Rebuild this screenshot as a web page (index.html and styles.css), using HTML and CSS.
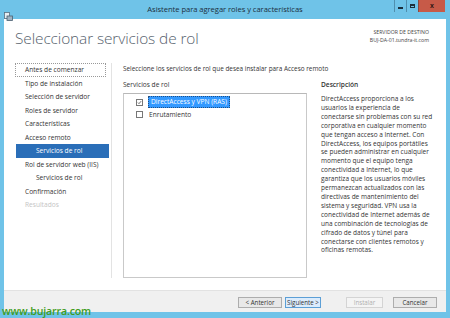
FILE: index.html
```html
<!DOCTYPE html>
<html lang="es">
<head>
<meta charset="utf-8">
<title>Asistente para agregar roles y características</title>
<link rel="stylesheet" href="styles.css">
</head>
<body>
<div class="window">
  <div class="titlebar">
    <div class="app-icon">
      <svg width="9" height="9" viewBox="0 0 9 9">
        <rect x="0.5" y="0.5" width="5" height="6" fill="#e8eef3" stroke="#5a6f80" stroke-width="0.8"/>
        <rect x="3" y="4" width="5.5" height="4.5" fill="#9fb3c2" stroke="#4a5f70" stroke-width="0.8"/>
      </svg>
    </div>
    <div class="title">Asistente para agregar roles y características</div>
    <div class="winbtns">
      <div class="wb wb-min"><span class="glyph-min"></span></div>
      <div class="wb wb-max"><span class="glyph-max"></span></div>
      <div class="wb wb-close">x</div>
    </div>
  </div>
  <div class="client">
    <div class="header">
      <h1 class="page-title">Seleccionar servicios de rol</h1>
      <div class="dest">
        <div>SERVIDOR DE DESTINO</div>
        <div>BUJ-DA-01.tundra-it.com</div>
      </div>
    </div>
    <div class="body">
      <nav class="nav">
        <div class="nav-item first">Antes de comenzar</div>
        <div class="nav-item">Tipo de instalación</div>
        <div class="nav-item">Selección de servidor</div>
        <div class="nav-item">Roles de servidor</div>
        <div class="nav-item">Características</div>
        <div class="nav-item">Acceso remoto</div>
        <div class="nav-item sub active">Servicios de rol</div>
        <div class="nav-item">Rol de servidor web (IIS)</div>
        <div class="nav-item sub">Servicios de rol</div>
        <div class="nav-item">Confirmación</div>
        <div class="nav-item disabled">Resultados</div>
      </nav>
      <main class="main">
        <div class="intro">Seleccione los servicios de rol que desea instalar para Acceso remoto</div>
        <div class="cols">
          <div class="services">
            <div class="label">Servicios de rol</div>
            <div class="listbox">
              <div class="row">
                <span class="cb checked">
                  <svg width="7" height="7" viewBox="0 0 7 7"><path d="M1.3 3.6 L2.8 5.1 L5.8 1.6" fill="none" stroke="#333" stroke-width="1"/></svg>
                </span>
                <span class="row-text selected">DirectAccess y VPN (RAS)</span>
              </div>
              <div class="row">
                <span class="cb"></span>
                <span class="row-text">Enrutamiento</span>
              </div>
            </div>
          </div>
          <div class="desc">
            <div class="label strong">Descripción</div>
            <p class="desc-text">DirectAccess proporciona a los<br>usuarios la experiencia de<br>conectarse sin problemas con su red<br>corporativa en cualquier momento<br>que tengan acceso a Internet. Con<br>DirectAccess, los equipos portátiles<br>se pueden administrar en cualquier<br>momento que el equipo tenga<br>conectividad a Internet, lo que<br>garantiza que los usuarios móviles<br>permanezcan actualizados con las<br>directivas de mantenimiento del<br>sistema y seguridad. VPN usa la<br>conectividad de Internet además de<br>una combinación de tecnologías de<br>cifrado de datos y túnel para<br>conectarse con clientes remotos y<br>oficinas remotas.</p>
          </div>
        </div>
      </main>
    </div>
    <div class="footer">
      <button class="btn">&lt; Anterior</button>
      <button class="btn default">Siguiente &gt;</button>
      <button class="btn disabled-btn">Instalar</button>
      <button class="btn">Cancelar</button>
    </div>
  </div>
  <div class="watermark">www.bujarra.com</div>
</div>
</body>
</html>
```

FILE: styles.css
```css
* { box-sizing: border-box; }
html, body { margin: 0; padding: 0; }
body {
  width: 450px;
  height: 318px;
  overflow: hidden;
  background: #6fc3e8;
  font-family: "Open Sans", "Noto Sans", sans-serif;
  color: #333;
}
.window {
  position: relative;
  width: 450px;
  height: 318px;
  display: flex;
  flex-direction: column;
  background: #6fc3e8;
}
.titlebar {
  height: 19px;
  display: flex;
  align-items: flex-start;
  position: relative;
}
.app-icon {
  width: 9px;
  height: 9px;
  margin: 4px 0 0 4px;
}
.title {
  position: absolute;
  left: 0;
  right: 0;
  top: 4px;
  text-align: center;
  font-size: 7.6px;
  color: #1b2f3d;
  letter-spacing: -0.05px;
}
.winbtns {
  position: absolute;
  top: 0;
  right: 5px;
  display: flex;
  height: 12px;
}
.wb {
  height: 12px;
  border-left: 1px solid #4f8fae;
  display: flex;
  align-items: center;
  justify-content: center;
}
.wb-min { width: 12px; }
.wb-max { width: 12px; }
.wb-close {
  width: 27px;
  background: #c75a48;
  color: #2a1410;
  font-size: 7px;
  font-weight: bold;
  border-left: 1px solid #8a4a40;
  line-height: 12px;
  font-family: "Liberation Sans", sans-serif;
}
.glyph-min {
  width: 5px;
  height: 2px;
  background: #1c2f3c;
  margin-top: 3px;
}
.glyph-max {
  width: 5px;
  height: 4px;
  border: 1px solid #1c2f3c;
  border-top-width: 2px;
}
.client {
  margin: 0 4px;
  height: 293px;
  background: #fff;
  display: flex;
  flex-direction: column;
}
.header {
  height: 44px;
  display: flex;
  justify-content: space-between;
  align-items: flex-start;
  padding: 0 17px 0 11px;
}
.page-title {
  margin: 8px 0 0 0;
  font-size: 15.4px;
  font-weight: 300;
  color: #56616d;
  letter-spacing: -0.1px;
  line-height: 24px;
}
.dest {
  margin-top: 9px;
  text-align: right;
  font-size: 5.2px;
  line-height: 8px;
  color: #444;
}
.body {
  flex: 1;
  display: flex;
  min-height: 0;
}
.nav {
  width: 97px;
  margin-left: 11px;
  border-right: 1px solid #e3e3e3;
  padding-top: 0;
  margin-bottom: 12px;
}
.nav-item {
  height: 13.5px;
  line-height: 13.5px;
  font-size: 6.6px;
  color: #333;
  padding-left: 10px;
  white-space: nowrap;
  margin-right: 4px;
}
.nav-item.first {
  outline: 1px dotted #999;
  outline-offset: -1px;
  margin-right: 5px;
}
.nav-item.sub { padding-left: 21px; }
.nav-item.active {
  background: #2a6eb8;
  color: #fff;
  margin-left: 1px;
  margin-right: 2px;
  padding-left: 20px;
}
.nav-item.disabled { color: #c4c4c4; }
.main {
  flex: 1;
  padding: 1px 0 0 11px;
  display: flex;
  flex-direction: column;
}
.intro {
  font-size: 6.4px;
  height: 15px;
  line-height: 10px;
  color: #333;
  white-space: nowrap;
}
.cols {
  flex: 1;
  display: flex;
  min-height: 0;
  padding-bottom: 12px;
}
.services {
  width: 184px;
  display: flex;
  flex-direction: column;
}
.label {
  font-size: 6.6px;
  line-height: 10px;
  height: 14px;
  padding-top: 1px;
  color: #333;
}
.label.strong { font-weight: 600; height: 16px; }
.listbox {
  flex: 1;
  border: 1px solid #c9c9c9;
  border-top-color: #b8b8b8;
  padding-top: 2px;
}
.row {
  height: 12px;
  display: flex;
  align-items: center;
  padding-left: 12px;
}
.cb {
  width: 7px;
  height: 7px;
  border: 1px solid #777;
  background: #fff;
  margin-right: 5px;
  display: flex;
  align-items: center;
  justify-content: center;
  flex-shrink: 0;
}
.cb svg { display: block; }
.row-text {
  font-size: 6.6px;
  line-height: 9px;
  padding: 0 1px;
  color: #333;
  white-space: nowrap;
}
.row-text.selected {
  display: inline-block;
  background: #3399ff;
  color: #ffffff;
  line-height: 10px;
  padding: 0 2px;
  border: 1px dotted #1f4f86;
}
.desc {
  margin-left: 14px;
  width: 118px;
}
.desc-text {
  margin: 0;
  font-size: 6.5px;
  line-height: 8.9px;
  color: #333;
  white-space: nowrap;
}
.footer {
  height: 22px;
  background: #f0f0f0;
  border-top: 1px solid #e2e2e2;
  display: flex;
  justify-content: flex-end;
  align-items: center;
  padding-right: 9px;
  gap: 3px;
  padding-top: 1px;
}
.btn {
  height: 11px;
  padding: 0;
  margin: 0;
  font-family: "Open Sans", "Noto Sans", sans-serif;
  font-size: 6.2px;
  line-height: 9px;
  color: #333;
  background: #e8e8e8;
  border: 1px solid #adadad;
  border-radius: 0;
  width: 44px;
}
.btn.default {
  background: #dcecfc;
  border-color: #5c9fd6;
  width: 36px;
  margin-right: 22px;
}
.btn.disabled-btn {
  color: #b0b0b0;
  background: #f4f4f4;
  border-color: #d4d4d4;
  width: 37px;
  margin-right: 7px;
}
.watermark {
  position: absolute;
  left: 2px;
  bottom: 0;
  font-family: "Open Sans", "Noto Sans", sans-serif;
  font-size: 10.6px;
  font-weight: 600;
  color: #3f9c1c;
  letter-spacing: -0.15px;
  line-height: 13px;
}
```
